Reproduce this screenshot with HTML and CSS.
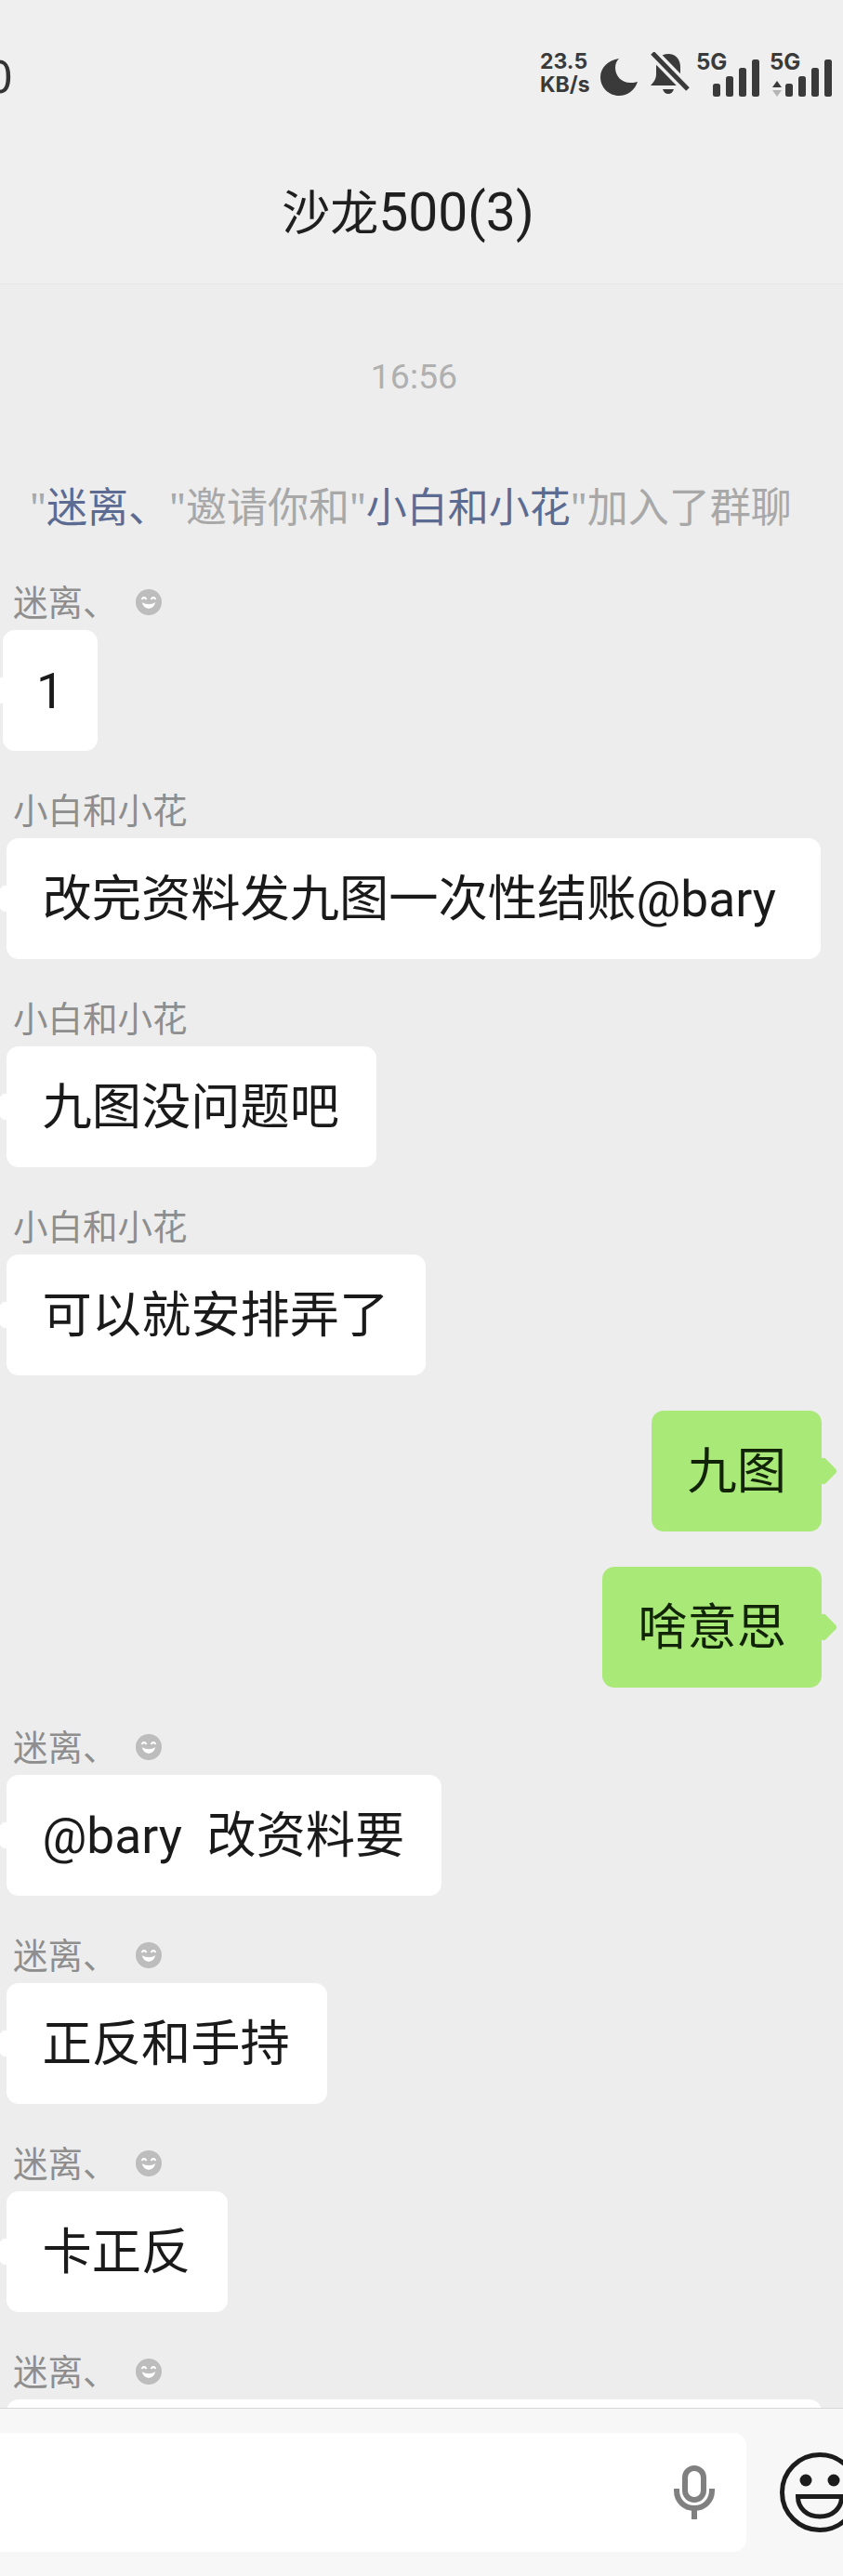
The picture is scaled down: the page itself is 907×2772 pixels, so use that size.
FILE: index.html
```html
<!DOCTYPE html>
<html lang="zh-CN">
<head>
<meta charset="utf-8">
<title>沙龙500(3)</title>
<link rel="stylesheet" href="styles.css">
</head>
<body>
<div class="screen">
  <header class="top">
    <div class="status">
      <span class="clock">0</span>
      <div class="indicators">
        <span class="speed">23.5<br>KB/s</span>
        <svg class="moon" viewBox="0 0 41 41"><path d="M20 0C8 2 0 10 0 20c0 11 9 20 20 20 9 0 17-6 20-15-3 1-6 1-8 1-9 0-16-7-16-16 0-4 1-7 4-10z" fill="#3a3a3a"/></svg>
        <svg class="bell" viewBox="0 0 42 48"><path d="M19 2c8 0 13 6 13 14v8c0 4 4 8 6 12H0c3-3 6-7 6-12v-8c0-8 5-14 13-14zM13 40h12c-1 3-3 5-6 5s-5-2-6-5z" fill="#3a3a3a"/><path d="M0-1l42 43" stroke="#efefef" stroke-width="12" fill="none"/><path d="M2 1l38 39" stroke="#3a3a3a" stroke-width="5" fill="none"/></svg>
        <div class="signal">
          <span class="gen">5G</span>
          <svg class="bars" viewBox="0 0 50 40"><rect x="0" y="26" width="8" height="14" rx="2.5"/><rect x="14" y="18" width="8" height="22" rx="2.5"/><rect x="28" y="9" width="8" height="31" rx="2.5"/><rect x="42" y="0" width="8" height="40" rx="2.5"/></svg>
        </div>
        <div class="signal signal-data">
          <span class="gen">5G</span>
          <svg class="arrows" viewBox="0 0 12 17"><path d="M6 0l5 7H1z" fill="#3a3a3a"/><path d="M1 10h10l-5 7z" fill="#b5b5b5"/></svg>
          <svg class="bars" viewBox="0 0 50 40"><rect x="0" y="26" width="8" height="14" rx="2.5"/><rect x="14" y="18" width="8" height="22" rx="2.5"/><rect x="28" y="9" width="8" height="31" rx="2.5"/><rect x="42" y="0" width="8" height="40" rx="2.5"/></svg>
        </div>
      </div>
    </div>
    <h1 class="title">沙龙<span class="title-num">500(3)</span></h1>
  </header>

  <main class="chat">
    <div class="time">16:56</div>
    <div class="system">"<span class="link">迷离、</span>"邀请你和"<span class="link">小白和小花</span>"加入了群聊</div>

    <div class="msg">
      <div class="name">迷离、<svg class="smile" viewBox="0 0 28 28"><circle cx="14" cy="14" r="14" fill="#bdbdbd"/><path d="M6.500 11q2.500-4 5 0M16.500 11q2.500-4 5 0" fill="none" stroke="#fff" stroke-width="2"/><path d="M7 14c1 9 13 9 14 0c-4 3-10 3-14 0z" fill="#fff"/></svg></div>
      <div class="bubble bubble-first">1</div>
    </div>
    <div class="msg">
      <div class="name">小白和小花</div>
      <div class="bubble bubble-long">改完资料发九图一次性结账@bary</div>
    </div>
    <div class="msg">
      <div class="name">小白和小花</div>
      <div class="bubble">九图没问题吧</div>
    </div>
    <div class="msg">
      <div class="name">小白和小花</div>
      <div class="bubble">可以就安排弄了</div>
    </div>
    <div class="msg msg-mine">
      <div class="bubble bubble-mine">九图</div>
    </div>
    <div class="msg msg-mine">
      <div class="bubble bubble-mine">啥意思</div>
    </div>
    <div class="msg">
      <div class="name">迷离、<svg class="smile" viewBox="0 0 28 28"><circle cx="14" cy="14" r="14" fill="#bdbdbd"/><path d="M6.500 11q2.500-4 5 0M16.500 11q2.500-4 5 0" fill="none" stroke="#fff" stroke-width="2"/><path d="M7 14c1 9 13 9 14 0c-4 3-10 3-14 0z" fill="#fff"/></svg></div>
      <div class="bubble">@bary  改资料要</div>
    </div>
    <div class="msg">
      <div class="name">迷离、<svg class="smile" viewBox="0 0 28 28"><circle cx="14" cy="14" r="14" fill="#bdbdbd"/><path d="M6.500 11q2.500-4 5 0M16.500 11q2.500-4 5 0" fill="none" stroke="#fff" stroke-width="2"/><path d="M7 14c1 9 13 9 14 0c-4 3-10 3-14 0z" fill="#fff"/></svg></div>
      <div class="bubble">正反和手持</div>
    </div>
    <div class="msg">
      <div class="name">迷离、<svg class="smile" viewBox="0 0 28 28"><circle cx="14" cy="14" r="14" fill="#bdbdbd"/><path d="M6.500 11q2.500-4 5 0M16.500 11q2.500-4 5 0" fill="none" stroke="#fff" stroke-width="2"/><path d="M7 14c1 9 13 9 14 0c-4 3-10 3-14 0z" fill="#fff"/></svg></div>
      <div class="bubble">卡正反</div>
    </div>
    <div class="msg">
      <div class="name">迷离、<svg class="smile" viewBox="0 0 28 28"><circle cx="14" cy="14" r="14" fill="#bdbdbd"/><path d="M6.500 11q2.500-4 5 0M16.500 11q2.500-4 5 0" fill="none" stroke="#fff" stroke-width="2"/><path d="M7 14c1 9 13 9 14 0c-4 3-10 3-14 0z" fill="#fff"/></svg></div>
      <div class="bubble bubble-wide"></div>
    </div>
  </main>

  <footer class="composer">
    <div class="input">
      <svg class="mic" viewBox="0 0 44 58"><rect x="12" y="3" width="20" height="34" rx="10" fill="none" stroke="#808080" stroke-width="6"/><path d="M3 25v2c0 11 8 19 19 19s19-8 19-19v-2" fill="none" stroke="#808080" stroke-width="6"/><path d="M22 46v12" stroke="#808080" stroke-width="6"/></svg>
    </div>
    <svg class="emoji" viewBox="0 0 86 86"><circle cx="43" cy="43" r="40.500" fill="none" stroke="#1c1c1c" stroke-width="5"/><circle cx="28" cy="30" r="6.500" fill="#1c1c1c"/><circle cx="58" cy="30" r="6.500" fill="#1c1c1c"/><path d="M19.500 47.500h47c0 13-10 21.500-23.500 21.500s-23.500-8.500-23.500-21.500z" fill="none" stroke="#1c1c1c" stroke-width="5"/></svg>
  </footer>
</div>
</body>
</html>
```
FILE: styles.css
```css
* { box-sizing: border-box; }
html, body { margin: 0; padding: 0; }
body {
  font-family: "Noto Sans", "Noto Sans CJK SC", sans-serif;
  background: #ededed;
}
.screen {
  width: 907px;
  height: 2772px;
  display: flex;
  flex-direction: column;
  overflow: hidden;
}

/* top */
.top {
  height: 306px;
  flex: none;
  background: #efefef;
  border-bottom: 1px solid #e6e6e6;
}
.status {
  height: 160px;
  padding-top: 52px;
  display: flex;
  justify-content: space-between;
  align-items: flex-start;
}
.clock {
  margin-left: -15px;
  font-size: 50px;
  line-height: 58px;
  color: #333;
}
.indicators {
  display: flex;
  align-items: flex-end;
  height: 52px;
  margin-right: 12px;
}
.speed {
  width: 65px;
  font-family: "Inter", "Noto Sans", sans-serif;
  font-size: 23px;
  font-weight: 700;
  line-height: 25px;
  color: #3a3a3a;
}
.moon { width: 41px; height: 41px; margin-right: 13px; }
.bell { width: 42px; height: 48px; margin-right: 7px; }
.signal {
  position: relative;
  display: flex;
  align-items: flex-end;
  justify-content: flex-end;
  width: 68px;
  height: 48px;
  margin-right: 11px;
}
.signal-data { width: 67px; margin-right: 0; }
.gen {
  position: absolute;
  left: 0;
  top: -2px;
  font-family: "Inter", "Noto Sans", sans-serif;
  font-size: 24px;
  font-weight: 700;
  line-height: 26px;
  color: #3a3a3a;
}
.bars { width: 50px; height: 40px; fill: #3a3a3a; }
.arrows { position: absolute; left: 2px; bottom: 0; width: 12px; height: 17px; }
.title {
  margin: 38px 0 0;
  padding-right: 29px;
  font-size: 52px;
  font-weight: 400;
  line-height: 60px;
  text-align: center;
  color: #1f1f1f;
}
.title-num { font-family: "Roboto", sans-serif; font-size: 57px; }

/* chat */
.chat {
  flex: 1;
  min-height: 0;
  overflow: hidden;
  background: #ededed;
}
.time {
  margin-top: 74px;
  padding-right: 16px;
  font-family: "Roboto", sans-serif;
  font-size: 37.5px;
  line-height: 50px;
  text-align: center;
  color: #b0b0b0;
}
.system {
  margin-top: 90px;
  padding-left: 32px;
  font-size: 44px;
  line-height: 50px;
  color: #a8a8a8;
  white-space: nowrap;
}
.link { color: #5b6b92; }
.msg { margin-top: 40px; padding-left: 7px; }
.system + .msg { margin-top: 54px; }
.name {
  display: flex;
  align-items: center;
  height: 48px;
  margin-bottom: 6px;
  margin-left: 7px;
  font-size: 37.5px;
  line-height: 48px;
  color: #8e8e8e;
}
.smile { width: 28px; height: 28px; margin-left: 19px; }
.bubble {
  position: relative;
  width: fit-content;
  height: 130px;
  padding: 2px 40px 0 38.5px;
  border-radius: 13px;
  background: #fff;
  font-family: "Roboto", "Noto Sans CJK SC", sans-serif;
  font-size: 53.25px;
  line-height: 128px;
  color: #1a1a1a;
  white-space: pre;
}
.bubble::before {
  content: "";
  position: absolute;
  left: -13px;
  top: 54px;
  width: 22px;
  height: 22px;
  border-radius: 4px;
  background: inherit;
  transform: rotate(45deg);
}
.bubble-first { margin-left: -4px; width: 102px; padding: 2px 0 0; text-align: center; }
.bubble-long { padding-right: 48px; }
.bubble-wide { width: 877px; }
.msg-mine {
  display: flex;
  justify-content: flex-end;
  margin-top: 38px;
  padding: 0 23px 0 0;
}
.bubble-mine { padding: 2px 38px 0; background: #a9e977; color: #122407; }
.bubble-mine::before { left: auto; right: -13px; }

/* composer */
.composer {
  flex: none;
  height: 181px;
  display: flex;
  align-items: center;
  background: #f7f7f7;
  border-top: 1px solid #d6d6d6;
}
.input {
  flex: none;
  width: 820px;
  height: 128px;
  margin-left: -17px;
  display: flex;
  align-items: center;
  justify-content: flex-end;
  padding-right: 34px;
  border-radius: 14px;
  background: #fff;
}
.mic { width: 44px; height: 58px; }
.emoji { flex: none; width: 86px; height: 86px; margin-left: 36px; }
```
